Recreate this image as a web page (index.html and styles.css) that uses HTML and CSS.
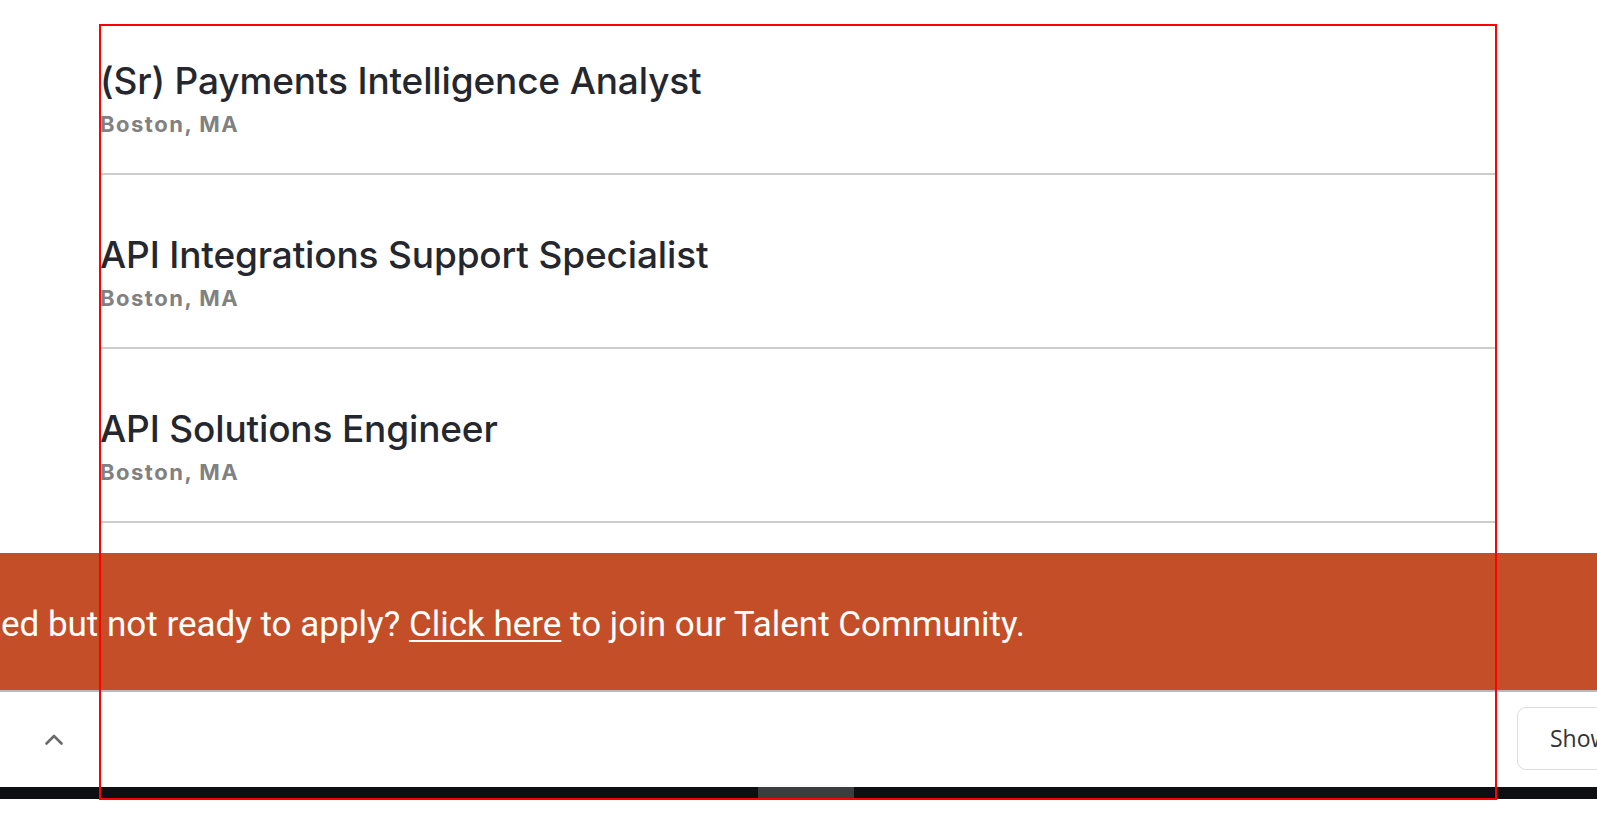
FILE: index.html
```html
<!DOCTYPE html>
<html lang="en">
<head>
<meta charset="utf-8">
<title>Jobs</title>
<link rel="stylesheet" href="styles.css">
</head>
<body>
<div class="page">
  <div class="list-wrap">
    <ul class="jobs">
      <li class="job">
        <a class="job-title" href="#">(Sr) Payments Intelligence Analyst</a>
        <span class="job-loc">Boston, MA</span>
      </li>
      <li class="job">
        <a class="job-title" href="#">API Integrations Support Specialist</a>
        <span class="job-loc">Boston, MA</span>
      </li>
      <li class="job">
        <a class="job-title" href="#">API Solutions Engineer</a>
        <span class="job-loc">Boston, MA</span>
      </li>
      <li class="job">
        <a class="job-title" href="#">Associate Account Executive</a>
        <span class="job-loc">Boston, MA</span>
      </li>
    </ul>
  </div>
  <div class="banner">
    <p class="banner-text">Interested but not ready to apply?&nbsp;<a href="#">Click here</a>&nbsp;to join our Talent Community.</p>
  </div>
  <div class="toolbar">
    <button class="up-btn" aria-label="Back to top">
      <svg width="18" height="11" viewBox="0 0 18 11"><path d="M1.5 9.5 L9 2 L16.5 9.5" fill="none" stroke="#6b6b6b" stroke-width="2.6" stroke-linecap="round" stroke-linejoin="round"/></svg>
    </button>
    <button class="show-btn">Show all</button>
  </div>
  <div class="hscroll"><div class="hscroll-thumb"></div></div>
  <div class="bottom-space"></div>
  <div class="highlight"></div>
</div>
</body>
</html>
```
FILE: styles.css
```css
html, body {
  margin: 0;
  padding: 0;
  background: #ffffff;
}
body {
  width: 1597px;
  height: 825px;
  overflow: hidden;
}
.page {
  position: relative;
  width: 1597px;
  height: 825px;
  display: flex;
  flex-direction: column;
}
.list-wrap {
  height: 553px;
  flex: none;
  overflow: hidden;
  padding-top: 1px;
  box-sizing: border-box;
}
.jobs {
  list-style: none;
  margin: 0 0 0 99px;
  padding: 0;
  width: 1398px;
}
.job {
  height: 174px;
  box-sizing: border-box;
  border-bottom: 2px solid #cccccc;
  display: flex;
  flex-direction: column;
  padding-top: 57px;
}
.job-title {
  font-family: "Inter", "Liberation Sans", sans-serif;
  font-size: 37px;
  line-height: 45px;
  font-weight: 500;
  color: #24272e;
  text-decoration: none;
  padding-left: 1px;
  letter-spacing: -0.15px;
}
.job-loc {
  margin-top: 8px;
  font-family: "Inter", "Liberation Sans", sans-serif;
  font-size: 22px;
  line-height: 27px;
  font-weight: 700;
  color: #818181;
  padding-left: 1px;
  letter-spacing: 1.5px;
}
.banner {
  height: 139px;
  flex: none;
  box-sizing: border-box;
  background: #c34e27;
  border-bottom: 2px solid #b9b9b9;
  padding: 51px 572px 0 0;
  overflow: hidden;
  display: flex;
  justify-content: flex-end;
  align-items: flex-start;
}
.banner-text {
  margin: 0;
  flex: none;
  white-space: nowrap;
  font-family: "Roboto", "Liberation Sans", sans-serif;
  font-size: 35px;
  line-height: 42px;
  color: #ffffff;
}
.banner-text a {
  color: #ffffff;
  text-decoration: underline;
  text-decoration-thickness: 2px;
  text-underline-offset: 4px;
}
.toolbar {
  height: 95px;
  flex: none;
  display: flex;
  align-items: center;
  justify-content: space-between;
  background: #ffffff;
}
.up-btn {
  border: 0;
  background: none;
  padding: 0;
  margin-left: 45px;
  width: 18px;
  height: 11px;
  display: flex;
}
.show-btn {
  margin-right: -120px;
  margin-top: -3px;
  width: 200px;
  height: 63px;
  background: #ffffff;
  border: 1px solid #dddddd;
  border-radius: 9px;
  text-align: left;
  padding-left: 32px;
  font-family: "Open Sans", "Liberation Sans", sans-serif;
  font-size: 23px;
  color: #333333;
}
.hscroll {
  height: 12px;
  flex: none;
  background: #0d0f12;
}
.hscroll-thumb {
  margin-left: 758px;
  width: 96px;
  height: 12px;
  background: #3c3d3f;
}
.bottom-space {
  flex: 1;
  background: #ffffff;
}
.highlight {
  position: absolute;
  left: 99px;
  top: 24px;
  width: 1398px;
  height: 776px;
  border: 2px solid #ff0000;
  box-sizing: border-box;
  pointer-events: none;
}
```
